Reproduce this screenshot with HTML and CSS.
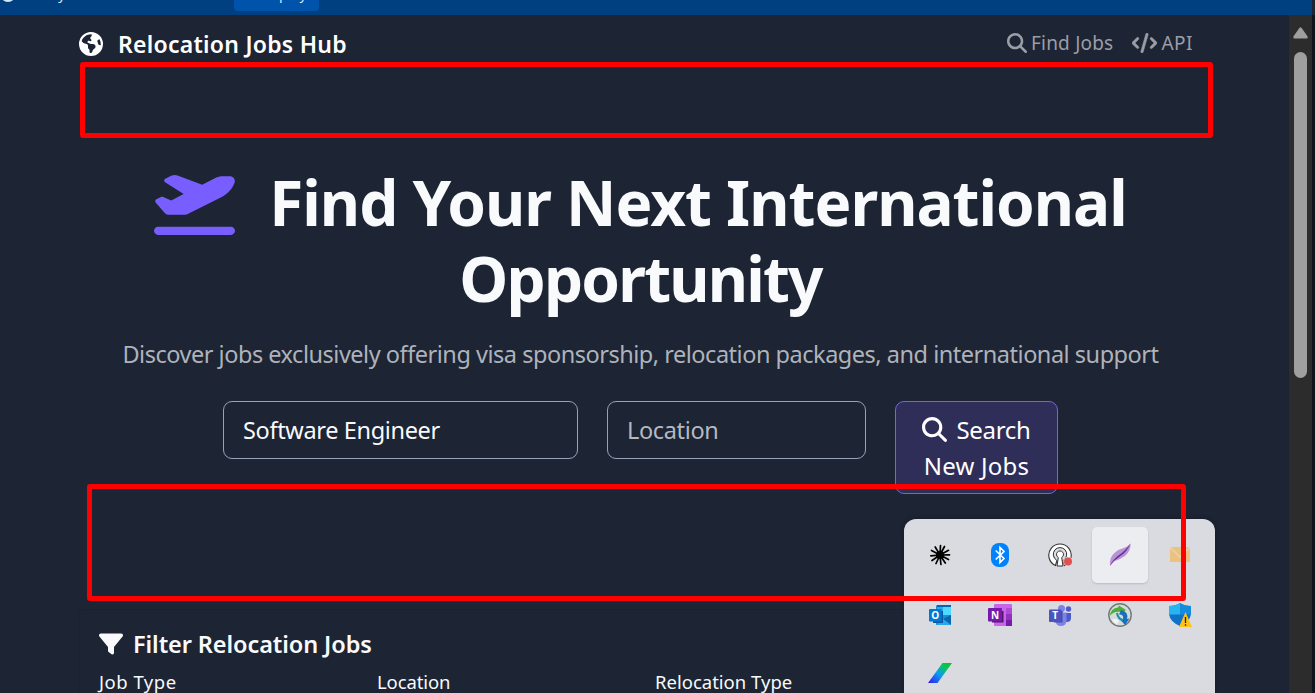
FILE: index.html
```html
<!DOCTYPE html>
<html lang="en">
<head>
<meta charset="utf-8">
<title>Relocation Jobs Hub</title>
<link rel="stylesheet" href="styles.css">
</head>
<body>
<svg class="defs" aria-hidden="true">
  <symbol id="search" viewBox="0 0 512 512"><path d="M416 208c0 45.9-14.9 88.3-40 122.7L502.6 457.4c12.5 12.5 12.5 32.8 0 45.3s-32.8 12.5-45.3 0L330.7 376c-34.4 25.2-76.8 40-122.7 40C93.1 416 0 322.9 0 208S93.1 0 208 0S416 93.1 416 208zM208 352a144 144 0 1 0 0-288 144 144 0 1 0 0 288z"/></symbol>
</svg>
<div class="topbar">
  <div class="topbar-site"><span class="ring"></span><span>history</span></div>
  <div class="deploy"><span>⤒</span><span>Deploy</span></div>
</div>
<div class="window">
  <main class="page">
    <nav class="nav">
      <a class="brand">
        <svg class="globe" viewBox="0 0 512 512"><path d="M57.7 193l9.4 16.4c8.3 14.5 21.9 25.2 38 29.8L163 255.7c17.2 4.9 29 20.6 29 38.5v39.9c0 11 6.2 21 16 25.9s16 14.9 16 25.9v39c0 15.6 14.9 26.9 29.9 22.6c16.1-4.6 28.6-17.5 32.7-33.8l2.8-11.2c4.2-16.9 15.2-31.4 30.3-40l8.1-4.6c15-8.5 24.2-24.5 24.2-41.7v-8.3c0-12.7-5.1-24.9-14.1-33.9l-3.9-3.9c-9-9-21.2-14.1-33.9-14.1H257c-11.1 0-22.1-2.9-31.8-8.4l-34.5-19.7c-4.3-2.5-7.6-6.5-9.2-11.2c-3.2-9.6 1.1-20 10.2-24.5l5.9-3c6.6-3.3 14.3-3.9 21.3-1.5l23.2 7.7c8.2 2.7 17.2-.4 21.9-7.5c4.7-7 4.2-16.3-1.2-22.8l-13.6-16.3c-10-12-9.9-29.5 .3-41.3l15.7-18.3c8.8-10.3 10.2-25 3.5-36.7l-2.4-4.2c-3.5-.2-6.9-.3-10.4-.3C163.1 48 84.4 108.9 57.7 193zM464 256c0-36.8-9.6-71.4-26.4-101.5L412 164.8c-15.7 6.3-23.8 23.8-18.5 39.8l16.9 50.7c3.5 10.4 12 18.3 22.6 20.9l29.1 7.3c1.2-9 1.8-18.2 1.8-27.5zM0 256a256 256 0 1 1 512 0A256 256 0 1 1 0 256z"/></svg>
        <span class="brand-name">Relocation Jobs Hub</span>
      </a>
      <div class="links">
        <a class="link"><svg class="link-icon" viewBox="0 0 512 512"><use href="#search"/></svg><span class="find">Find Jobs</span></a>
        <a class="link"><svg class="code-icon" viewBox="0 0 640 512"><path stroke="currentColor" stroke-width="12" d="M392.8 1.2c-17-4.9-34.7 5-39.6 22l-128 448c-4.9 17 5 34.7 22 39.6s34.7-5 39.6-22l128-448c4.900-17-5-34.700-22-39.600zm80.600 120.100c-12.500 12.500-12.500 32.800 0 45.300L562.700 256l-89.400 89.400c-12.500 12.500-12.500 32.800 0 45.300s32.800 12.500 45.300 0l112-112c12.500-12.500 12.500-32.800 0-45.300l-112-112c-12.500-12.500-32.800-12.500-45.300 0zm-306.700 0c-12.500-12.500-32.800-12.500-45.300 0l-112 112c-12.500 12.500-12.500 32.800 0 45.300l112 112c12.500 12.500 32.800 12.500 45.300 0s12.500-32.800 0-45.300L77.300 256l89.400-89.400c12.500-12.500 12.500-32.800 0-45.300z"/></svg><span class="api">API</span></a>
      </div>
    </nav>
    <header class="hero">
      <h1 class="title">
        <span class="title-line"><svg class="plane" viewBox="0 0 640 512"><path d="M381 114.9L186.1 41.8c-16.7-6.2-35.2-5.3-51.1 2.7L89.1 67.4C78 73 77.2 88.5 87.6 95.2l146.9 94.5L136 240 77.8 214.1c-8.7-3.9-18.8-3.7-27.3 .6L18.3 230.8c-9.3 4.7-11.8 16.8-5 24.7l73.1 85.3c6.1 7.1 15 11.2 24.3 11.2H248.4c5 0 9.9-1.2 14.3-3.4L535.6 212.2c46.5-23.3 82.5-63.3 100.8-112C645.9 75 627.2 48 600.2 48H542.4c-20.2 0-40.2 4.8-58.2 14L381 114.9zM0 480c0 17.7 14.3 32 32 32H608c17.7 0 32-14.3 32-32s-14.3-32-32-32H32c-17.7 0-32 14.3-32 32z"/></svg><span class="title-a">Find Your Next International</span></span>
        <span class="title-line"><span class="title-b">Opportunity</span></span>
      </h1>
      <p class="lead"><span class="lead-text">Discover jobs exclusively offering visa sponsorship, relocation packages, and international support</span></p>
      <form class="search">
        <div class="field field-role"><span class="role">Software Engineer</span></div>
        <div class="field field-place"><span class="place">Location</span></div>
        <div class="submit">
          <span class="submit-line"><svg class="submit-icon" viewBox="0 0 512 512"><use href="#search"/></svg><span class="submit-a">Search</span></span>
          <span class="submit-line"><span class="submit-b">New Jobs</span></span>
        </div>
      </form>
    </header>
    <section class="filters">
      <h2 class="filters-title"><svg class="funnel" viewBox="0 0 512 512"><path d="M3.9 54.9C10.5 40.9 24.5 32 40 32H472c15.5 0 29.5 8.9 36.1 22.9s4.6 30.5-5.2 42.5L320 320.9V448c0 12.1-6.8 23.2-17.7 28.6s-23.8 4.3-33.5-3l-64-48c-8.1-6-12.8-15.5-12.8-25.6V320.9L9 97.3C-.7 85.4-2.8 68.8 3.9 54.9z"/></svg><span class="filters-name">Filter Relocation Jobs</span></h2>
      <div class="filters-row"><span class="label-type">Job Type</span><span class="label-place">Location</span><span>Relocation Type</span></div>
    </section>
  </main>
  <div class="scrollbar">
    <svg class="arrow" viewBox="0 0 15 12"><path d="M6.2 1.2Q7.5-.5 8.8 1.2L14.3 9Q15.4 11.300 13.500 11.500H1.500Q-.4 11.300.7 9Z"/></svg>
    <div class="thumb"></div>
  </div>
</div>

<div class="tray">
  <div class="cell"><svg viewBox="0 0 24 24"><g stroke="#000" stroke-width="1.700" stroke-linecap="round"><path d="M12 12L12.500 2.500M12 12L16.500 3.500M12 12L20.500 7.300M12 12L21.500 11.800M12 12L20.500 16.500M12 12L17.300 20M12 12L12.900 21.500M12 12L8 20.500M12 12L4 17.500M12 12L2.800 12.800M12 12L3.500 7.500M12 12L7.200 4"/></g><circle cx="12" cy="12" r="4" fill="#000"/></svg></div>
  <div class="cell"><svg viewBox="0 0 24 24"><rect x="3" width="18" height="24" rx="8" fill="#0082fc"/><path d="M7.700 7.500L16 15.500 12 19.500V4.500L16 8.500 7.700 16.500" fill="none" stroke="#fff" stroke-width="1.600"/></svg></div>
  <div class="cell"><svg viewBox="0 0 24 24"><path d="M7.500 22.500A11.200 11.200 0 1 1 16.500 22.500L15 17A6.200 6.200 0 1 0 9 17Z" fill="#fff" stroke="#333" stroke-width="1.100"/><path d="M8.500 17A6.700 6.700 0 1 1 15.500 17" fill="#dcdde1" stroke="#333"/><path d="M10.300 14.500A3.500 3.500 0 1 1 13.700 14.500L15 23H9Z" fill="#fff" stroke="#333"/><circle cx="20" cy="18.500" r="4.800" fill="#dadbe0"/><circle cx="20" cy="18.500" r="4" fill="#e05252"/></svg></div>
  <div class="cell active"><svg viewBox="0 0 24 24"><path d="M2 23Q1 14 7 9.500 11 6 17 4.500 20 3.500 22.500.5 23 8 17 13 11 17 6.500 18Q4 19.500 2 23Z" fill="#b795d3"/><path d="M2 23Q5 16 11 12T22.500.5Q19 9 12.500 13T2 23Z" fill="#73309f"/></svg></div>
  <div class="cell"><svg viewBox="0 0 24 24"><path d="M2 4H22V19H2Z" fill="#ecc27e"/><path d="M2 4L12 14 22 4" fill="none" stroke="#e1d5c3" stroke-width="1.300"/></svg></div>
  <div class="cell"><svg viewBox="-1 0 24 24"><path d="M8 2H22V22H7V3Z" fill="#1490df"/><path d="M8 3H15V12H8Z" fill="#29a9ea"/><path d="M14 4H22V12H14Z" fill="#50d9ff"/><path d="M8 2H22V4H8Z" fill="#0364b8"/><path d="M22 12V22L14 16Z" fill="#0a66ad"/><path d="M7 22L14 16 22 22Z" fill="#28a8ea"/><path d="M4 8H14V20H4Z" fill="#0a5b9d"/><rect y="6" width="12.500" height="12.500" rx="1" fill="#0078d4"/><text class="glyph" x="6.200" y="15.800">O</text></svg></div>
  <div class="cell"><svg viewBox="0 0 24 24"><rect x="6" y="1" width="18" height="22" rx="1" fill="#ca64ea"/><path d="M18 5H24V11H18Z" fill="#ae4bd5"/><path d="M18 11H24V17H18Z" fill="#9332bf"/><path d="M18 17H24V23H18Z" fill="#7719aa"/><path d="M4 8H15.500V19.500H4Z" fill="#4d176b"/><rect y="5" width="14" height="13.500" rx="1" fill="#7719aa"/><text class="glyph" x="7" y="15.500">N</text></svg></div>
  <div class="cell"><svg viewBox="-1 0 24 24"><circle cx="12.500" cy="5.500" r="3.500" fill="#7b83eb"/><circle cx="19.500" cy="6" r="2.700" fill="#5059c9"/><path d="M14 10H22V15Q22 19.500 17 19Z" fill="#5059c9"/><path d="M6 9.500H17.500V18Q17 23 12 23T6.500 18Z" fill="#7b83eb"/><path d="M6 8H13.500V19.500H5Z" fill="#464b9b"/><rect y="6.500" width="12.500" height="12.500" rx="1" fill="#4b53bc"/><text class="glyph" x="6.200" y="16.200">T</text></svg></div>
  <div class="cell"><svg viewBox="0 0 24 24"><circle cx="12" cy="12" r="11.200" fill="#d5dcdd" stroke="#777" stroke-width="1.400"/><path d="M1.500 13Q3 5 10 4.500L11 2.500 18 7 12 11.500V8.800Q6 8 1.500 13Z" fill="#4fab3a"/><path d="M13 7Q21 9 19 16L21.500 15.500 17 22 12.500 17 15 16.500Q16 11 11 11.500Z" fill="#176fbe"/><path d="M9 10Q10 16 15 17" fill="none" stroke="#218da3" stroke-width="2"/><path d="M4 17Q7 14 11 18L9 21Q6 20 4 17Z" fill="#f2f3f3"/></svg></div>
  <div class="cell"><svg viewBox="0 0 24 24"><path d="M12 0Q16 3 23 3V11Q22 19 12 23Q2 19 1 11V3Q8 3 12 0Z" fill="#0f72c7"/><path d="M12 0V11.500H1V3Q8 3 12 0Z" fill="#27b4f0"/><path d="M12 0Q16 3 23 3V11.500H12Z" fill="#168bdc"/><path d="M17.500 9L24 24H11Z" fill="#ffc21a"/><path d="M17.500 14V20M17.500 21.200V22.800" stroke="#2b2100" stroke-width="1.300"/></svg></div>
  <div class="cell"><svg viewBox="0 2 24 24"><defs><linearGradient id="slash" x1="1" y1="0" x2="0" y2="1"><stop offset="0" stop-color="#0fc01d"/><stop offset=".25" stop-color="#08c657"/><stop offset=".55" stop-color="#0a9df5"/><stop offset="1" stop-color="#3217e8"/></linearGradient></defs><path d="M14.500 2H24L9.500 22H0Z" fill="url(#slash)"/></svg></div>
</div>
<div class="mark mark-nav"></div>
<div class="mark mark-gap"></div>
</body>
</html>
```
FILE: styles.css
```css
* { box-sizing: border-box; }
body { margin: 0; height: 693px; overflow: hidden; background: #1d2433; color: #f8fafc; font-family: "Noto Sans", sans-serif; display: flex; flex-direction: column; }
svg { display: block; flex: none; fill: currentColor; }
.defs { display: none; }
span { white-space: nowrap; }
.topbar { height: 15px; flex: none; background: #004080; width: 1312px; display: flex; overflow: hidden; font-size: 14px; color: #d6e8ff; }
.topbar-site { width: 234px; display: flex; gap: 4px; margin-top: -16px; line-height: 20px; }
.ring { width: 16px; height: 17px; margin-top: 1px; border: 2px solid #d6e8ff; border-radius: 50%; }
.deploy { width: 85px; height: 27px; margin-top: -16px; border-radius: 4px; background: #0053aa; display: flex; gap: 7px; padding-left: 14px; line-height: 20px; }
.window { flex: 1; min-height: 0; display: flex; background: #11141d; }
.page { width: 1289px; background: #1d2433; padding: 0 79px; overflow: hidden; }
.nav { height: 57px; display: flex; justify-content: space-between; align-items: center; padding-right: 17px; }
.brand { display: flex; align-items: center; gap: 15px; }
.globe { width: 24px; height: 24px; color: #fff; }
.brand-name { font-size: 23px; font-weight: 600; letter-spacing: .25px; color: #fff; }
.links { display: flex; gap: 19px; color: #9b9ea6; font-size: 19px; padding-bottom: 1px; }
.link { display: flex; align-items: center; gap: 4px; }
.link-icon { width: 20px; height: 20px; }
.code-icon { width: 25px; height: 20px; }
.find { letter-spacing: .2px; }
.api { letter-spacing: .5px; }
.hero { padding-top: 92px; display: flex; flex-direction: column; align-items: center; margin-left: -8px; }
.title { margin: 0; font-size: 62px; line-height: 76px; font-weight: 700; width: 974px; }
.title-line { display: flex; justify-content: center; align-items: center; height: 76px; }
.plane { width: 81px; height: 65px; color: #795eff; margin-right: 34px; }
.title-a { letter-spacing: -1px; }
.title-b { letter-spacing: -1.8px; }
.lead { margin: 15px 0 0; height: 46px; line-height: 46px; font-size: 23.5px; letter-spacing: -.48px; color: #aeb3bb; }
.search { display: flex; gap: 29px; align-items: flex-start; margin: 24px 0 0; }
.field { height: 58px; border: 1px solid #94a3b8; border-radius: 9px; padding-left: 19px; font-size: 23.5px; letter-spacing: -.35px; line-height: 56px; }
.field-role { width: 355px; }
.field-place { width: 259px; color: #b4b9c1; }
.submit { width: 163px; height: 93px; border: 1px solid #765ff5; border-radius: 9px; background: #2f2e58; padding-top: 9px; font-size: 24px; color: #fff; }
.submit-line { display: flex; height: 36px; align-items: center; justify-content: center; gap: 9px; }
.submit-icon { width: 25px; height: 25px; }
.submit-a { letter-spacing: -.3px; }
.submit-b { letter-spacing: .2px; }
.filters { margin-top: 115px; padding: 19px; height: 120px; border: 1px solid #1b2130; border-radius: 4px; }
.filters-title { display: flex; align-items: center; gap: 10px; margin: 0; height: 30px; font-size: 23.5px; font-weight: 600; letter-spacing: -.1px; }
.funnel { width: 24px; height: 24px; }
.filters-row { display: grid; grid-template-columns: 278px 278px 1fr; font-size: 18.5px; line-height: 26px; margin-top: 10px; }
.label-type { letter-spacing: .5px; }
.label-place { letter-spacing: -.1px; }
.scrollbar { width: 23px; background: #2c2c2c; padding: 12px 5px 0; color: #9f9f9f; }
.arrow { width: 15px; height: 12px; margin-left: -1px; }
.thumb { width: 13px; height: 326px; margin-top: 13px; border-radius: 7px; background: #9f9f9f; }
.tray { position: absolute; left: 904px; top: 519px; width: 311px; height: 190px; border-radius: 12px; background: #d9dbe1; padding: 6px; display: grid; grid-template-columns: repeat(5, 60px); grid-template-rows: repeat(3, 60px); box-shadow: 0 0 4px #141a26; }
.cell { display: flex; align-items: center; justify-content: center; }
.cell svg { width: 24px; height: 24px; }
.active { margin: 2px; border-radius: 5px; background: #ecedf0; box-shadow: 0 1px 2px #b9bbc2; }
.glyph { font: 700 10px "Open Sans", sans-serif; fill: #fff; text-anchor: middle; }
.mark { position: absolute; border: 5px solid #f00; border-radius: 3px; }
.mark-nav { left: 80px; top: 62px; width: 1133px; height: 76px; }
.mark-gap { left: 87px; top: 484px; width: 1099px; height: 117px; }
```
